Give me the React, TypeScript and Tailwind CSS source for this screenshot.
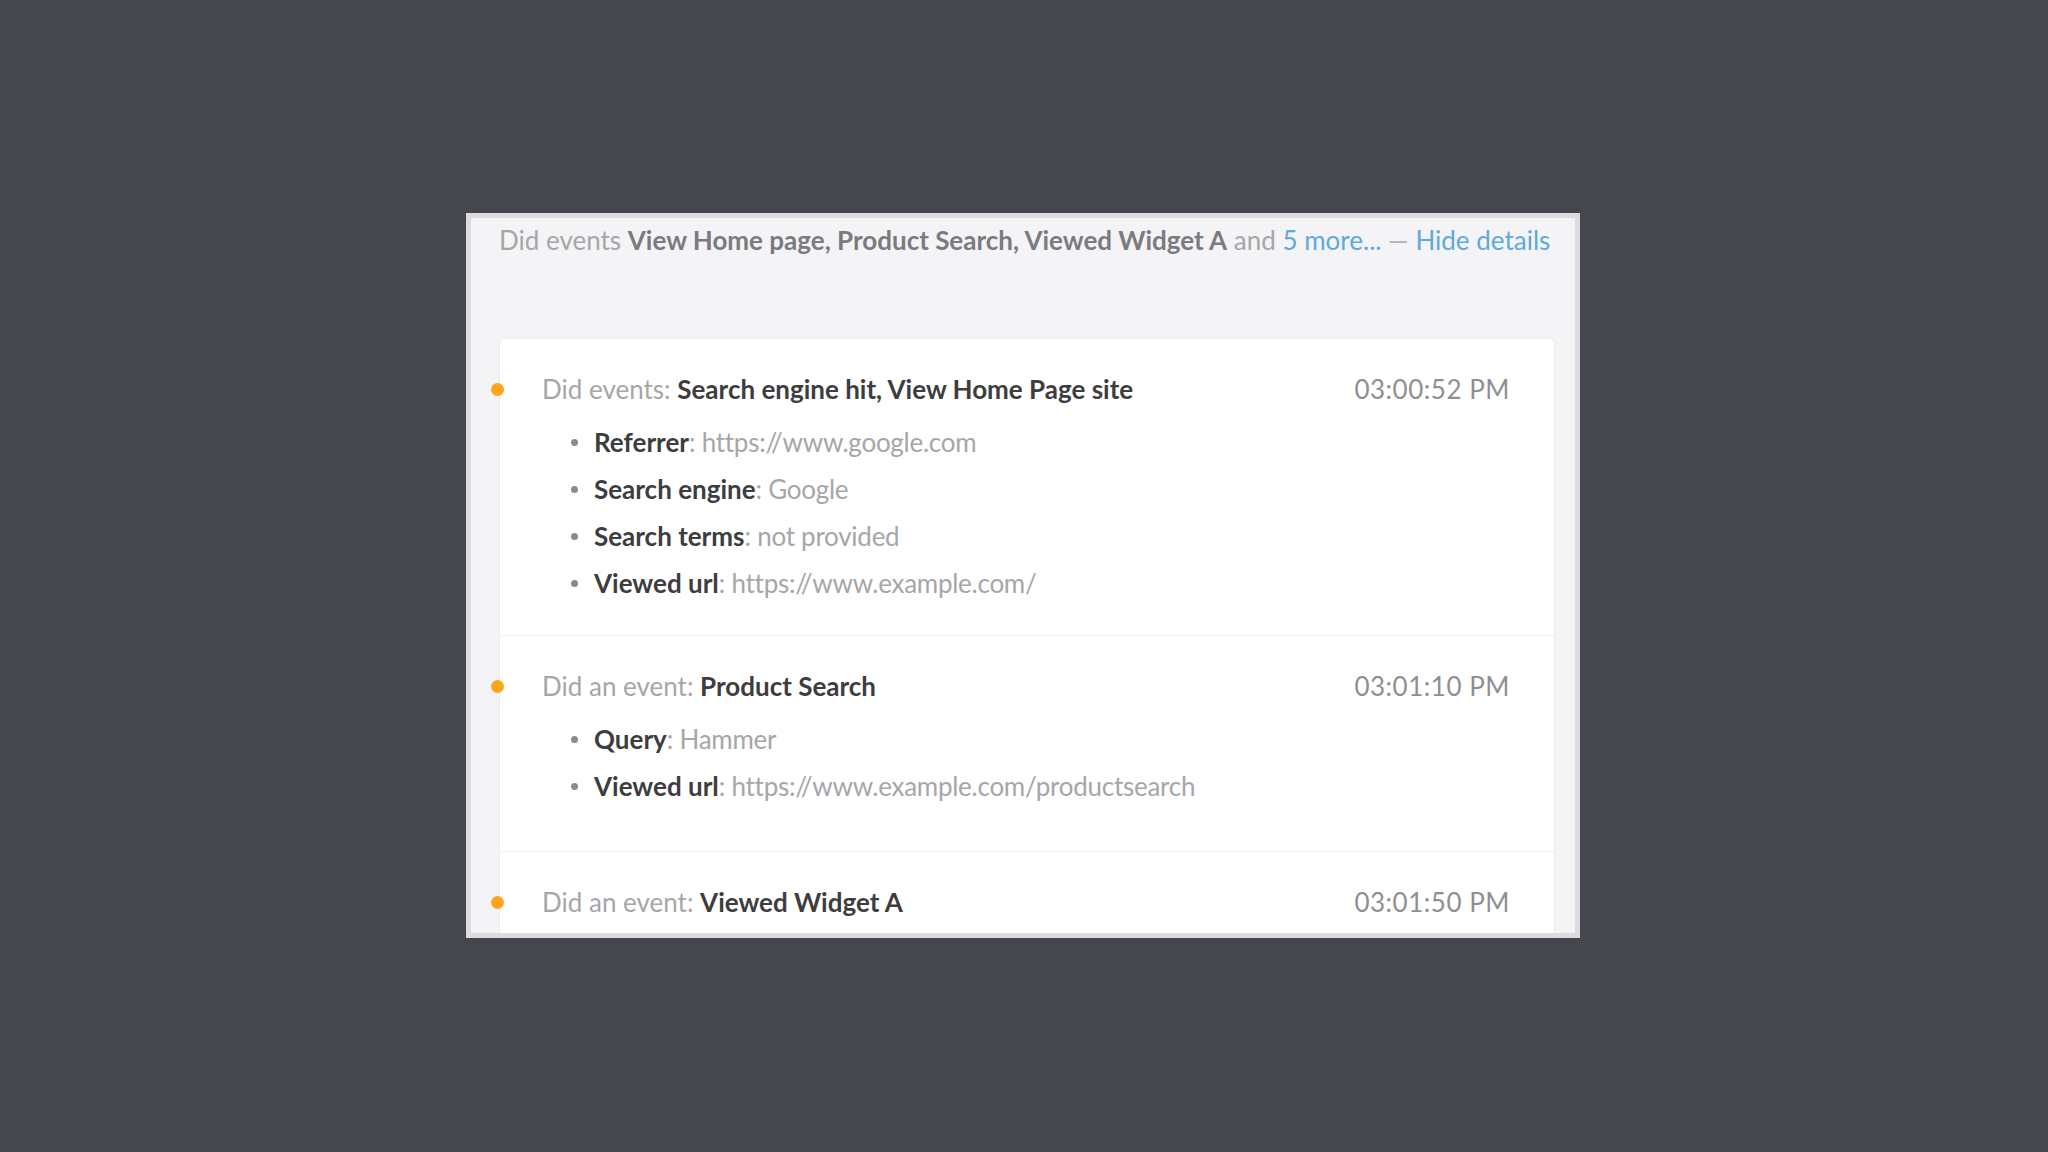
import React from "react";

type Prop = { label: string; value: string };
type Event = {
  prefix: string;
  name: string;
  time: string;
  props: Prop[];
  pad: string;
};

const events: Event[] = [
  {
    prefix: "Did events:",
    name: "Search engine hit, View Home Page site",
    time: "03:00:52 PM",
    props: [
      { label: "Referrer", value: "https://www.google.com" },
      { label: "Search engine", value: "Google" },
      { label: "Search terms", value: "not provided" },
      { label: "Viewed url", value: "https://www.example.com/" },
    ],
    pad: "pb-[28px]",
  },
  {
    prefix: "Did an event:",
    name: "Product Search",
    time: "03:01:10 PM",
    props: [
      { label: "Query", value: "Hammer" },
      { label: "Viewed url", value: "https://www.example.com/productsearch" },
    ],
    pad: "pb-[41px]",
  },
  {
    prefix: "Did an event:",
    name: "Viewed Widget A",
    time: "03:01:50 PM",
    props: [],
    pad: "pb-[40px]",
  },
];

function EventRow({ event, first }: { event: Event; first: boolean }) {
  return (
    <div
      className={`relative pt-[34px] pl-[42px] pr-[44px] ${event.pad} ${
        first ? "" : "border-t border-[#efeff2]"
      }`}
    >
      <span className="absolute left-[-9px] top-[44px] h-[13px] w-[13px] rounded-full bg-[#fca41c]" />
      <div className="flex items-center justify-between leading-[32px]">
        <div>
          <span className="text-[#a6a6a9]">{event.prefix} </span>
          <span className="font-bold text-[#3d3d40]">{event.name}</span>
        </div>
        <span className="tracking-[0.02em] text-[#8f8f93]">{event.time}</span>
      </div>
      {event.props.length > 0 && (
        <ul className="mt-[14px] pl-[29px]">
          {event.props.map((p) => (
            <li key={p.label} className="flex items-center leading-[47px]">
              <span className="mr-[16px] h-[7px] w-[7px] rounded-full bg-[#8a8a8e]" />
              <span className="font-bold text-[#3d3d40]">{p.label}</span>
              <span className="tracking-[-0.01em] text-[#a6a6a9]">
                :&nbsp;{p.value}
              </span>
            </li>
          ))}
        </ul>
      )}
    </div>
  );
}

export default function App() {
  return (
    <div
      className="min-h-screen w-full bg-[#46474e] pl-[466px] pt-[213px] text-[26px]"
      style={{ fontFamily: "Lato, 'Open Sans', sans-serif" }}
    >
      <div className="h-[725px] w-[1114px] overflow-hidden border-[5px] border-[#dcdce0] bg-[#f4f4f6]">
        <div className="pl-[28px] pr-[20px] pt-[4px]">
          <p className="whitespace-nowrap leading-[36px] text-[#a6a6a9]">
            Did events{" "}
            <span className="font-bold text-[#7b7b7f]">
              View Home page, Product Search, Viewed Widget A
            </span>{" "}
            and <span className="text-[#5ea9df]">5 more...</span>{" "}
            <span className="text-[#b0b0b4]">—</span>{" "}
            <span className="text-[#5ea9df]">Hide details</span>
          </p>
          <div className="mt-[80px] rounded-t-[6px] border border-b-0 border-[#ebebee] bg-white">
            {events.map((e, i) => (
              <EventRow key={e.time} event={e} first={i === 0} />
            ))}
          </div>
        </div>
      </div>
    </div>
  );
}
